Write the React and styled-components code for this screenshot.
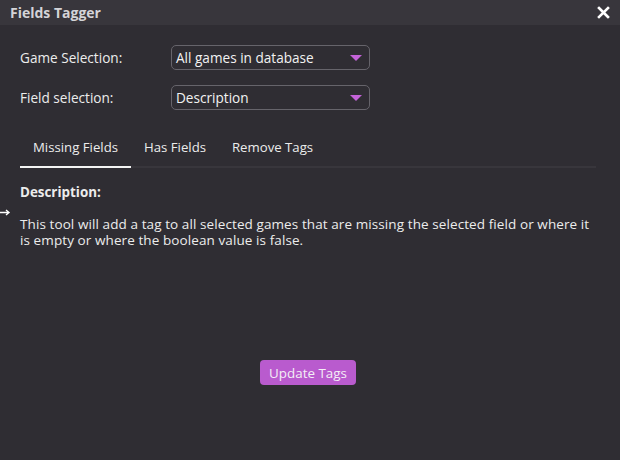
import React, { useState } from 'react';
import styled, { createGlobalStyle } from 'styled-components';

const GlobalStyle = createGlobalStyle`
  html, body {
    margin: 0;
    padding: 0;
    background: #2f2d33;
  }
  body {
    font-family: "Open Sans", "DejaVu Sans", sans-serif;
    color: #ececec;
  }
`;

const Window = styled.div`
  position: relative;
  width: 620px;
  height: 460px;
  background: #2f2d33;
  display: flex;
  flex-direction: column;
  overflow: hidden;
`;

const TitleBar = styled.div`
  height: 25px;
  background: #38363c;
  display: flex;
  align-items: center;
  justify-content: space-between;
  padding: 0 10px;
`;

const Title = styled.span`
  font-size: 14px;
  font-weight: 700;
  color: #d4d4d8;
`;

const CloseButton = styled.button`
  background: none;
  border: none;
  padding: 0;
  color: #ffffff;
  display: flex;
  cursor: pointer;
`;

const Content = styled.div`
  padding: 20px 24px 0 20px;
  display: flex;
  flex-direction: column;
`;

const FormRows = styled.div`
  display: flex;
  flex-direction: column;
  gap: 15px;
`;

const Row = styled.div`
  display: flex;
  align-items: center;
`;

const Label = styled.label`
  width: 151px;
  font-size: 13.6px;
  color: #ececec;
`;

const Select = styled.div`
  width: 199px;
  height: 25px;
  box-sizing: border-box;
  border: 1px solid #66646b;
  border-radius: 5px;
  display: flex;
  align-items: center;
  justify-content: space-between;
  padding: 0 7px 0 4px;
  font-size: 13.6px;
  color: #f2f2f2;
  cursor: pointer;
`;

const Caret = styled.span`
  width: 0;
  height: 0;
  border-left: 6px solid transparent;
  border-right: 6px solid transparent;
  border-top: 6px solid #c463d9;
`;

const TabBar = styled.div`
  display: flex;
  margin-top: 18px;
  border-bottom: 2px solid #38363c;
`;

const Tab = styled.button`
  height: 40px;
  padding: 0 13px;
  margin-bottom: -2px;
  background: none;
  border: none;
  border-bottom: 2px solid ${(p) => (p.$active ? '#f4f4f4' : 'transparent')};
  color: #ececec;
  font-family: inherit;
  font-size: 13.2px;
  cursor: pointer;
`;

const Heading = styled.div`
  margin-top: 15px;
  font-size: 13.4px;
  font-weight: 700;
  color: #ececec;
`;

const Paragraph = styled.p`
  margin: 15px 0 0;
  font-size: 13.5px;
  letter-spacing: 0.09px;
  line-height: 16px;
  color: #ececec;
`;

const Footer = styled.div`
  display: flex;
  justify-content: center;
  margin-top: 112px;
`;

const PrimaryButton = styled.button`
  height: 25px;
  padding: 0 9px;
  background: #b95bce;
  border: none;
  border-radius: 4px;
  color: #f4eef6;
  font-family: inherit;
  font-size: 13.4px;
  cursor: pointer;
`;

const Pointer = styled.svg`
  position: absolute;
  left: 0;
  top: 209px;
`;

const tabs = ['Missing Fields', 'Has Fields', 'Remove Tags'];

const App = () => {
  const [active, setActive] = useState(0);

  return (
    <>
      <GlobalStyle />
      <Window>
        <TitleBar>
          <Title>Fields Tagger</Title>
          <CloseButton aria-label="Close">
            <svg width="13" height="13" viewBox="0 0 13 13">
              <path d="M2 2 L11 11 M11 2 L2 11" stroke="currentColor" strokeWidth="2.6" strokeLinecap="square" />
            </svg>
          </CloseButton>
        </TitleBar>
        <Content>
          <FormRows>
            <Row>
              <Label>Game Selection:</Label>
              <Select>
                All games in database
                <Caret />
              </Select>
            </Row>
            <Row>
              <Label>Field selection:</Label>
              <Select>
                Description
                <Caret />
              </Select>
            </Row>
          </FormRows>
          <TabBar>
            {tabs.map((t, i) => (
              <Tab key={t} $active={i === active} onClick={() => setActive(i)}>
                {t}
              </Tab>
            ))}
          </TabBar>
          <Heading>Description:</Heading>
          <Paragraph>
            This tool will add a tag to all selected games that are missing the selected field or where it
            is empty or where the boolean value is false.
          </Paragraph>
          <Footer>
            <PrimaryButton>Update Tags</PrimaryButton>
          </Footer>
        </Content>
        <Pointer width="11" height="8" viewBox="0 0 11 8">
          <path d="M0 3.5 H8 M6 1 L9 3.5 L6 6" stroke="#ffffff" strokeWidth="1.4" fill="none" />
        </Pointer>
      </Window>
    </>
  );
};

export default App;
